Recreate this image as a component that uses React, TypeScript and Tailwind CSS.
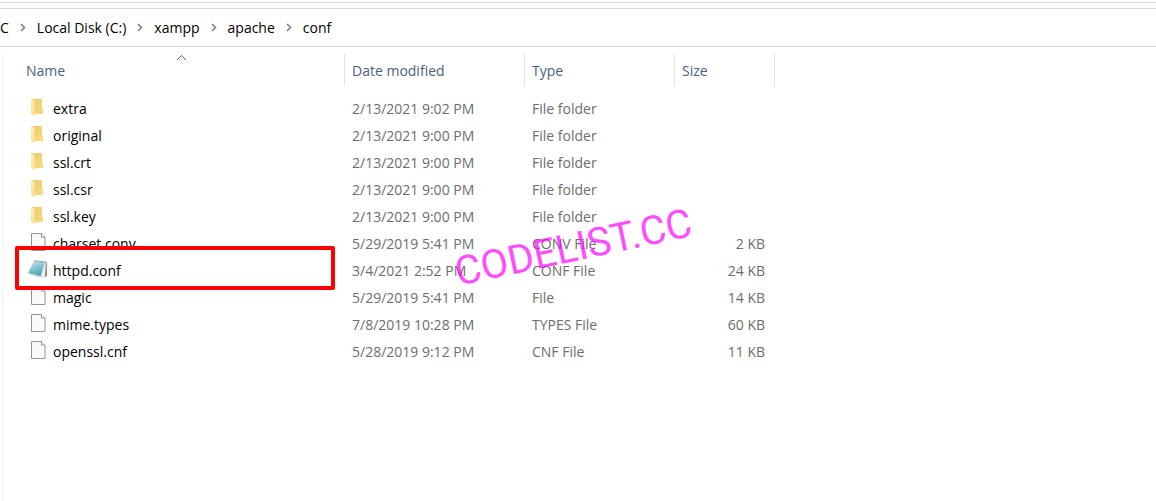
import { Fragment } from 'react';

type Kind = 'folder' | 'page' | 'notepad';

interface Entry {
  name: string;
  kind: Kind;
  modified: string;
  type: string;
  size?: string;
  marked?: boolean;
}

const crumbs = ['C', 'Local Disk (C:)', 'xampp', 'apache', 'conf'];

const entries: Entry[] = [
  { name: 'extra', kind: 'folder', modified: '2/13/2021 9:02 PM', type: 'File folder' },
  { name: 'original', kind: 'folder', modified: '2/13/2021 9:00 PM', type: 'File folder' },
  { name: 'ssl.crt', kind: 'folder', modified: '2/13/2021 9:00 PM', type: 'File folder' },
  { name: 'ssl.csr', kind: 'folder', modified: '2/13/2021 9:00 PM', type: 'File folder' },
  { name: 'ssl.key', kind: 'folder', modified: '2/13/2021 9:00 PM', type: 'File folder' },
  { name: 'charset.conv', kind: 'page', modified: '5/29/2019 5:41 PM', type: 'CONV File', size: '2 KB' },
  { name: 'httpd.conf', kind: 'notepad', modified: '3/4/2021 2:52 PM', type: 'CONF File', size: '24 KB', marked: true },
  { name: 'magic', kind: 'page', modified: '5/29/2019 5:41 PM', type: 'File', size: '14 KB' },
  { name: 'mime.types', kind: 'page', modified: '7/8/2019 10:28 PM', type: 'TYPES File', size: '60 KB' },
  { name: 'openssl.cnf', kind: 'page', modified: '5/28/2019 9:12 PM', type: 'CNF File', size: '11 KB' },
];

function FolderIcon() {
  return (
    <svg width="20" height="20" viewBox="0 0 20 20" aria-hidden="true">
      <defs>
        <linearGradient id="folderBack" x1="0" y1="0" x2="1" y2="1">
          <stop offset="0" stopColor="#e9c869" />
          <stop offset="1" stopColor="#fbdc84" />
        </linearGradient>
        <linearGradient id="folderFront" x1="0" y1="0" x2="0" y2="1">
          <stop offset="0" stopColor="#fff0b8" />
          <stop offset="1" stopColor="#fce08c" />
        </linearGradient>
      </defs>
      <path d="M3 2h11v9l1 1v5H6L3 15z" fill="url(#folderBack)" />
      <path d="M3 2l3.4 1.7v9.8L7 14v5l-3.4-1.6L3 16.500z" fill="url(#folderFront)" />
    </svg>
  );
}

function PageIcon() {
  return (
    <svg width="20" height="20" viewBox="0 0 20 20" aria-hidden="true">
      <defs>
        <linearGradient id="pageFill" x1="0" y1="0" x2="1" y2="1">
          <stop offset="0" stopColor="#f4f5f6" />
          <stop offset="1" stopColor="#fdfdfd" />
        </linearGradient>
      </defs>
      <path d="M3.500 1.500h10l3.500 3.500v13.500h-13.500z" fill="url(#pageFill)" stroke="#949494" />
      <path d="M13.500 1.500v3.500h3.500" fill="#fff" stroke="#949494" />
    </svg>
  );
}

function NotepadIcon() {
  return (
    <svg width="20" height="20" viewBox="0 0 20 20" aria-hidden="true">
      <defs>
        <linearGradient id="padCover" x1="0.300" y1="0" x2="0.700" y2="1">
          <stop offset="0" stopColor="#c5e5eb" />
          <stop offset="0.450" stopColor="#7fc3d1" />
          <stop offset="1" stopColor="#4c9fb5" />
        </linearGradient>
      </defs>
      <path d="M17.500 2.500l1.300 1v13.500l-2.300 1.500z" fill="#8d7350" />
      <path d="M16.800 3l1 1-.8 14-2.500 1.300-2.500-1.300z" fill="#e9edef" />
      <path d="M6 2l10.800 1-4 14.500L0 14z" fill="url(#padCover)" />
      <path d="M6 1.300l12 1.200-.3 1L5.700 2.400z" fill="#9aa9ad" />
      <path d="M0 14l12.800 3.500 1.700 1.800L1 15.500z" fill="#d5dde0" />
    </svg>
  );
}

function EntryIcon({ kind }: { kind: Kind }) {
  if (kind === 'folder') return <FolderIcon />;
  if (kind === 'notepad') return <NotepadIcon />;
  return <PageIcon />;
}

function Breadcrumb() {
  return (
    <nav aria-label="Path" className="mt-[5px] flex h-[39px] items-center border-y border-[#d9d9d9] text-black">
      {crumbs.map((crumb, i) => (
        <Fragment key={crumb}>
          {i > 0 && (
            <svg className="mx-[11px] shrink-0" width="6" height="9" viewBox="0 0 6 9" aria-hidden="true">
              <path d="M1 1l3.500 3.500L1 8" fill="none" stroke="#808080" strokeWidth="1.600" />
            </svg>
          )}
          <button type="button" className="whitespace-nowrap">
            {crumb}
          </button>
        </Fragment>
      ))}
    </nav>
  );
}

function Heading({ label, sorted }: { label: string; sorted?: boolean }) {
  return (
    <th
      scope="col"
      aria-sort={sorted ? 'ascending' : undefined}
      className={`relative border-r border-[#e2e2e2] p-0 pt-[2px] text-left font-normal text-[#4c607a] ${sorted ? 'pl-[23px]' : 'pl-[7px]'}`}
    >
      <button type="button">{label}</button>
      {sorted && (
        <svg className="absolute top-0 left-1/2 ml-[2px]" width="11" height="7" viewBox="0 0 11 7" aria-hidden="true">
          <path d="M1 6l4.500-4.500L10 6" fill="none" stroke="#6a6a6a" />
        </svg>
      )}
    </th>
  );
}

export default function App() {
  return (
    <div className="flex min-h-screen flex-col overflow-x-hidden bg-white pt-[2px] font-['Open_Sans','Noto_Sans',sans-serif] text-[14px] leading-5">
      <div className="border-t border-[#d9d9d9]" />
      <Breadcrumb />
      <main className="mt-[7px] ml-[2px] flex grow items-start border-l border-[#f3f3f3]">
        <div className="relative">
          <table className="w-[772px] table-fixed border-separate border-spacing-0">
            <colgroup>
              <col className="w-[342px]" />
              <col className="w-[180px]" />
              <col className="w-[150px]" />
              <col className="w-[100px]" />
            </colgroup>
            <thead>
              <tr className="h-8">
                <Heading label="Name" sorted />
                <Heading label="Date modified" />
                <Heading label="Type" />
                <Heading label="Size" />
              </tr>
            </thead>
            <tbody className="text-[#6d6d6d] before:block before:h-[9px]">
              {entries.map((entry) => (
                <tr key={entry.name} className="h-[27px]">
                  <td className="relative p-0 pl-[25px] text-black">
                    <div className="flex h-[27px] items-center gap-[5px]">
                      <span className="-mt-[3px]">
                        <EntryIcon kind={entry.kind} />
                      </span>
                      <span>{entry.name}</span>
                    </div>
                    {entry.marked && (
                      <div className="pointer-events-none absolute -top-[11px] right-[10px] -bottom-[6px] left-3 z-10 rounded-[2px] border-4 border-[#ff0000]" />
                    )}
                  </td>
                  <td className="p-0 pl-[7px]">{entry.modified}</td>
                  <td className="p-0 pl-[7px]">{entry.type}</td>
                  <td className="p-0 pr-[10px] text-right">{entry.size}</td>
                </tr>
              ))}
            </tbody>
          </table>
          <div className="pointer-events-none absolute top-[170px] left-[450px] -rotate-[12deg] font-['Roboto',sans-serif] text-[40px] leading-[48px] whitespace-nowrap text-[#ff00ff]/70">
            CODELIST.CC
          </div>
        </div>
      </main>
    </div>
  );
}
